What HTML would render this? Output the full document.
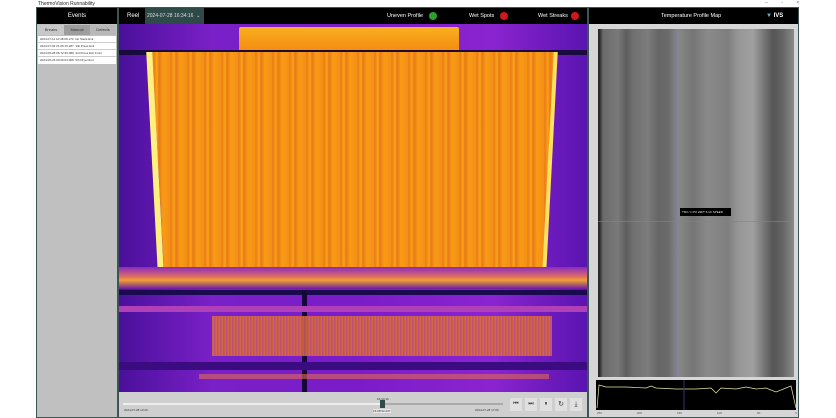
<!DOCTYPE html>
<html><head><style>
*{margin:0;padding:0;box-sizing:border-box}
body{width:836px;height:418px;background:#fff;position:relative;overflow:hidden;font-family:"Liberation Sans",sans-serif}
.a{position:absolute}
.t{font-size:5px;color:#fff}
</style></head><body>
<div class="a" style="left:38px;top:1px;font-size:5px;color:#222">ThermoVision Runnability</div>
<div class="a" style="left:765px;top:0px;font-size:5px;color:#666;letter-spacing:6px">– ▫ ×</div>
<div class="a" style="left:36px;top:7px;width:763px;height:411px;background:#3b5654"></div>
<div class="a" style="left:37px;top:8px;width:80px;height:409px;background:#c0c0c0"></div>
<div class="a" style="left:37px;top:8px;width:80px;height:16px;background:#000;color:#fff;font-size:6px;text-align:center;line-height:16px">Events</div>
<div class="a" style="left:38px;top:25px;width:78px;height:10px;font-size:4px;color:#333;display:flex">
<div style="flex:1;text-align:center;line-height:10px;background:#c8c8c8">Breaks</div><div style="flex:1;text-align:center;line-height:10px;background:#9e9e9e">Manual</div><div style="flex:1;text-align:center;line-height:10px;background:#b8b8b8">Defects</div></div>
<div class="a" style="left:38px;top:36px;width:78px;background:#fff;font-size:3px;color:#333">
<div style="height:7px;line-height:7px;border-bottom:1px solid #ccc;padding-left:2px">2024-07-11 10:48:08.170 &nbsp;1st Stack Exit</div>
<div style="height:7px;line-height:7px;border-bottom:1px solid #ccc;padding-left:2px">2024-07-02 21:06:16.287 &nbsp;3/E Press Exit</div>
<div style="height:7px;line-height:7px;border-bottom:1px solid #ccc;padding-left:2px">2024-06-28 06:72:36.089 &nbsp;3rd Press Exit Front</div>
<div style="height:7px;line-height:7px;padding-left:2px">2024-06-23 09:26:04.008 &nbsp;5th Dryer Exit</div></div>
<div class="a" style="left:119px;top:8px;width:468px;height:16px;background:#000"></div>
<div class="a t" style="left:127px;top:8px;line-height:16px;font-size:6px">Reel</div>
<div class="a" style="left:145px;top:8px;width:59px;height:16px;background:#2e4a48;color:#ddd;font-size:5px;line-height:16px;padding-left:2px">2024-07-28 16:34:16 &nbsp;⌄</div>
<div class="a t" style="left:387px;top:8px;line-height:16px;font-size:5.5px">Uneven Profile</div>
<div class="a" style="left:429px;top:12px;width:8px;height:8px;border-radius:50%;background:#2ca02c"></div>
<div class="a t" style="left:469px;top:8px;line-height:16px;font-size:5.5px">Wet Spots</div>
<div class="a" style="left:500px;top:12px;width:8px;height:8px;border-radius:50%;background:#d01818"></div>
<div class="a t" style="left:538px;top:8px;line-height:16px;font-size:5.5px">Wet Streaks</div>
<div class="a" style="left:571px;top:12px;width:8px;height:8px;border-radius:50%;background:#d01818"></div>
<div class="a" style="left:119px;top:24px;width:468px;height:368px;background:linear-gradient(90deg,#4a109a,#7a20c8 20%,#7a1cc8 50%,#8a24d0 80%,#5a14b0);overflow:hidden">
 <div class="a" style="left:120px;top:3px;width:220px;height:25px;background:linear-gradient(#f8b020,#f58a10);border-radius:2px"></div>
 <div class="a" style="left:0;top:26px;width:468px;height:5px;background:#1a0a40"></div>
 <div class="a" style="left:33px;top:28px;width:404px;height:222px;background:repeating-linear-gradient(90deg,#f7960f 0,#ec7c1a 2px,#faa514 5px,#e8781c 7px,#f89c12 11px,#f4901a 17px);border-radius:0 0 40px 40px/0 0 10px 10px;clip-path:polygon(0 0,100% 0,97% 100%,3% 100%)"></div>
 <div class="a" style="left:33px;top:28px;width:6px;height:220px;background:#fff080;transform:skewX(3deg)"></div>
 <div class="a" style="left:429px;top:28px;width:4px;height:220px;background:#ffe060;transform:skewX(-3deg)"></div>
 <div class="a" style="left:0;top:243px;width:468px;height:22px;background:linear-gradient(#8a2ac0,#e07060 45%,#f0a030 60%,#6a18a8)"></div>
 <div class="a" style="left:0;top:266px;width:468px;height:5px;background:#1a0a50"></div>
 <div class="a" style="left:183px;top:266px;width:5px;height:102px;background:#140838"></div>
 <div class="a" style="left:0;top:282px;width:468px;height:6px;background:#b040b8"></div>
 <div class="a" style="left:93px;top:292px;width:340px;height:40px;background:repeating-linear-gradient(90deg,#d8603a 0,#e47830 2px,#a840a0 3px);opacity:.85"></div>
 <div class="a" style="left:0;top:338px;width:468px;height:8px;background:#3a0c80"></div>
 <div class="a" style="left:80px;top:350px;width:350px;height:5px;background:#e06a50;opacity:.6"></div>
</div>
<div class="a" style="left:119px;top:392px;width:468px;height:25px;background:#cfcfcf"></div>
<div class="a" style="left:123px;top:403px;width:380px;height:2px;background:#aaa"></div>
<div class="a" style="left:123px;top:403px;width:260px;height:2px;background:#eee"></div>
<div class="a" style="left:380px;top:400px;width:5px;height:8px;background:#2e4a48"></div>
<div class="a" style="left:377px;top:397px;font-size:3px;color:#333">16:34:16</div>
<div class="a" style="left:373px;top:409px;font-size:3px;color:#333;background:#e8e8e8">16:08:52.237</div>
<div class="a" style="left:124px;top:408px;font-size:3px;color:#333">2024-07-28 13:20</div>
<div class="a" style="left:475px;top:408px;font-size:3px;color:#333">2024-07-28 17:06</div>
<div class="a" style="left:510px;top:398px;display:flex;gap:3px">
<div style="width:12px;height:13px;background:#e0e0e0;font-size:6px;text-align:center;line-height:13px;color:#334">⏮</div>
<div style="width:12px;height:13px;background:#e0e0e0;font-size:6px;text-align:center;line-height:13px;color:#334">⏭</div>
<div style="width:12px;height:13px;background:#e0e0e0;font-size:6px;text-align:center;line-height:13px;color:#334">⏸</div>
<div style="width:12px;height:13px;background:#e0e0e0;font-size:7px;text-align:center;line-height:13px;color:#334">↻</div>
<div style="width:12px;height:13px;background:#e0e0e0;font-size:7px;text-align:center;line-height:13px;color:#334">⤓</div></div>
<div class="a" style="left:589px;top:8px;width:209px;height:16px;background:#000"></div>
<div class="a t" style="left:661px;top:8px;line-height:16px;font-size:5.5px">Temperature Profile Map</div>
<div class="a t" style="left:766px;top:8px;line-height:16px;font-size:6px;font-weight:bold"><span style="color:#6ab0d0">▼</span> IVS</div>
<div class="a" style="left:589px;top:24px;width:209px;height:393px;background:#d6d6d6"></div>
<div class="a" style="left:598px;top:29px;width:196px;height:348px;background:linear-gradient(90deg,#222 0,#333 2px,#6a6a6a 5px,#7a7a7a 20px,#5e5e5e 28px,#707070 35px,#7c7c7c 50px,#666 60px,#6a6a6a 70px,#888 80px,#757575 95px,#8a8a8a 110px,#7e7e7e 130px,#969696 140px,#a0a0a0 155px,#7a7a7a 165px,#555 175px,#666 185px,#8a8a8a 196px)"></div>
<div class="a" style="left:676px;top:29px;width:2px;height:348px;background:rgba(120,120,220,.35)"></div>
<div class="a" style="left:598px;top:221px;width:196px;height:1px;background:rgba(120,120,220,.6)"></div>
<div class="a" style="left:680px;top:208px;width:51px;height:8px;background:#000;color:#eee;font-size:3px;line-height:8px;padding-left:2px">TR3 / 1 PO 22FT 5.1C SPEED</div>
<div class="a" style="left:596px;top:380px;width:200px;height:30px;background:#000"></div>
<svg class="a" style="left:596px;top:380px" width="200" height="30"><polyline fill="none" stroke="#e8e8a0" stroke-width="0.7" points="1,28 3,5 10,7 30,7 50,8 55,6 60,8 80,9 100,9 115,8 120,13 125,8 140,9 150,7 160,9 170,8 180,12 195,6 200,28"/><line x1="88" y1="0" x2="88" y2="30" stroke="#336" /></svg>
<div class="a" style="left:597px;top:411px;width:200px;font-size:3px;color:#555;display:flex;justify-content:space-between"><span>250</span><span>200</span><span>150</span><span>100</span><span>50</span><span>0</span></div>
</body></html>
